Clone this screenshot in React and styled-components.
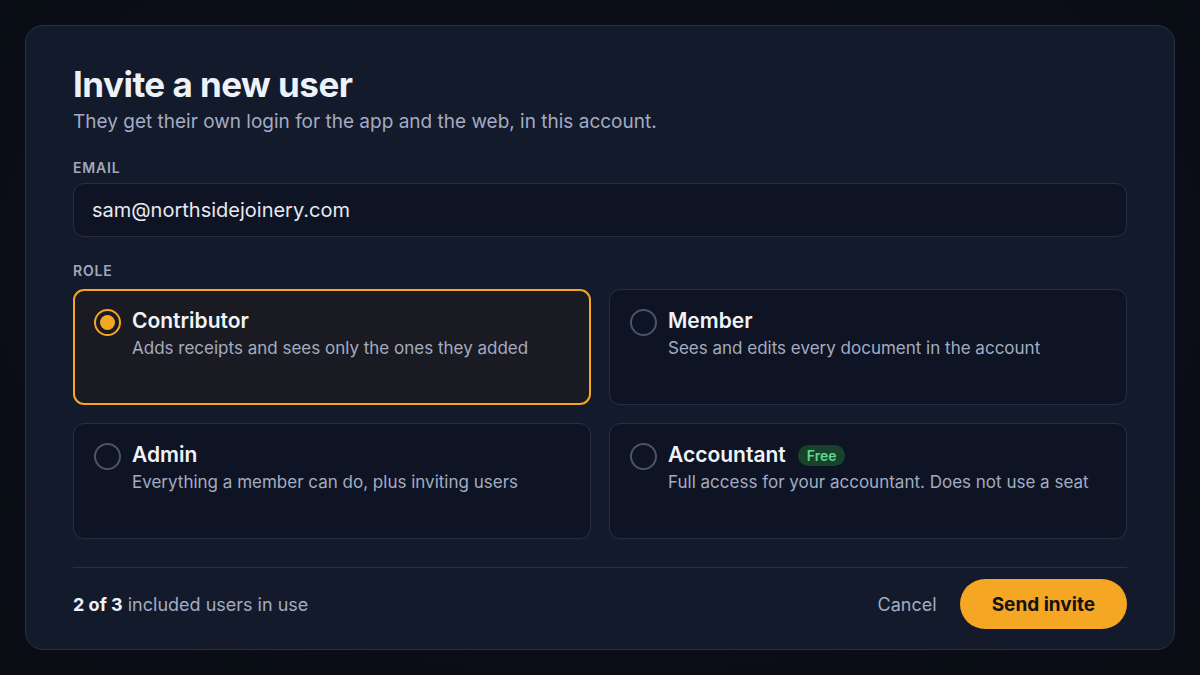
import React, { useState } from "react";
import styled, { createGlobalStyle } from "styled-components";

const GlobalStyle = createGlobalStyle`
  * { box-sizing: border-box; }
  html, body {
    margin: 0;
    padding: 0;
    background: #0a0d15;
    font-family: Inter, "Noto Sans", sans-serif;
  }
`;

const Page = styled.div`
  width: 1200px;
  height: 675px;
  padding: 25px;
  background: radial-gradient(ellipse at 50% 40%, #0d111c 0%, #090c13 100%);
`;

const Dialog = styled.div`
  height: 625px;
  background: #131a2b;
  border: 1px solid #263047;
  border-radius: 18px;
  padding: 37px 47px 19px;
  display: flex;
  flex-direction: column;
`;

const Title = styled.h1`
  margin: 0;
  font-size: 35px;
  line-height: 42px;
  font-weight: 700;
  color: #eef1f8;
  letter-spacing: -0.015em;
`;

const Subtitle = styled.p`
  margin: 3px 0 0;
  font-size: 19px;
  line-height: 28px;
  color: #a3acc0;
`;

const Label = styled.div`
  margin-top: ${(p) => p.$top}px;
  font-size: 14px;
  line-height: 17px;
  font-weight: 600;
  letter-spacing: 0.06em;
  color: #a0a9bc;
`;

const Input = styled.input`
  margin-top: 7px;
  width: 100%;
  height: 54px;
  background: #0e1424;
  border: 1px solid #262f44;
  border-radius: 11px;
  padding: 0 18px;
  font-family: inherit;
  font-size: 20px;
  color: #e6e9f1;
  outline: none;
`;

const RoleGrid = styled.div`
  margin-top: 10px;
  display: grid;
  grid-template-columns: 1fr 1fr;
  grid-auto-rows: 116px;
  gap: 18px;
`;

const RoleCard = styled.button`
  display: flex;
  align-items: flex-start;
  gap: 11px;
  text-align: left;
  font-family: inherit;
  cursor: pointer;
  border-radius: 11px;
  border: ${(p) => (p.$selected ? "2px solid #f5a623" : "1px solid #262f44")};
  background: ${(p) => (p.$selected ? "#1a1b22" : "#0e1424")};
  padding: ${(p) => (p.$selected ? "17px 19px" : "18px 20px")};
`;

const Radio = styled.span`
  flex: none;
  margin-top: 1px;
  width: 27px;
  height: 27px;
  border-radius: 50%;
  border: 2px solid ${(p) => (p.$selected ? "#f5a623" : "#4a546b")};
  display: flex;
  align-items: center;
  justify-content: center;
  &::after {
    content: "";
    width: 15px;
    height: 15px;
    border-radius: 50%;
    background: #f5a623;
    display: ${(p) => (p.$selected ? "block" : "none")};
  }
`;

const RoleText = styled.div`
  display: flex;
  flex-direction: column;
`;

const RoleName = styled.div`
  display: flex;
  align-items: center;
  gap: 12px;
  font-size: 21px;
  line-height: 26px;
  font-weight: 600;
  color: #f1f3f8;
`;

const Badge = styled.span`
  font-size: 14px;
  line-height: 21px;
  font-weight: 600;
  padding: 0 9px;
  border-radius: 999px;
  background: #17432c;
  color: #5fd88a;
`;

const RoleDesc = styled.div`
  margin-top: 2px;
  font-size: 17px;
  line-height: 24px;
  color: #a3acc0;
`;

const Footer = styled.div`
  margin-top: 28px;
  border-top: 1px solid #263047;
  padding-top: 11px;
  display: flex;
  align-items: center;
  justify-content: space-between;
`;

const Usage = styled.div`
  font-size: 18px;
  color: #a3acc0;
  b {
    color: #eef1f8;
    font-weight: 700;
  }
`;

const Actions = styled.div`
  display: flex;
  align-items: center;
  gap: 23px;
`;

const CancelButton = styled.button`
  background: none;
  border: none;
  font-family: inherit;
  font-size: 18px;
  color: #a3acc0;
  cursor: pointer;
  padding: 0;
`;

const PrimaryButton = styled.button`
  height: 50px;
  padding: 0 32px;
  border: none;
  border-radius: 999px;
  background: #f5a623;
  color: #121316;
  font-family: inherit;
  font-size: 19px;
  font-weight: 700;
  cursor: pointer;
`;

const roles = [
  { id: "contributor", name: "Contributor", desc: "Adds receipts and sees only the ones they added" },
  { id: "member", name: "Member", desc: "Sees and edits every document in the account" },
  { id: "admin", name: "Admin", desc: "Everything a member can do, plus inviting users" },
  { id: "accountant", name: "Accountant", desc: "Full access for your accountant. Does not use a seat", badge: "Free" },
];

export default function App() {
  const [role, setRole] = useState("contributor");
  const [email, setEmail] = useState("sam@northsidejoinery.com");

  return (
    <>
      <GlobalStyle />
      <Page>
        <Dialog>
          <Title>Invite a new user</Title>
          <Subtitle>They get their own login for the app and the web, in this account.</Subtitle>

          <Label $top={23}>EMAIL</Label>
          <Input value={email} onChange={(e) => setEmail(e.target.value)} />

          <Label $top={25}>ROLE</Label>
          <RoleGrid>
            {roles.map((r) => (
              <RoleCard key={r.id} $selected={role === r.id} onClick={() => setRole(r.id)}>
                <Radio $selected={role === r.id} />
                <RoleText>
                  <RoleName>
                    {r.name}
                    {r.badge && <Badge>{r.badge}</Badge>}
                  </RoleName>
                  <RoleDesc>{r.desc}</RoleDesc>
                </RoleText>
              </RoleCard>
            ))}
          </RoleGrid>

          <Footer>
            <Usage>
              <b>2 of 3</b> included users in use
            </Usage>
            <Actions>
              <CancelButton>Cancel</CancelButton>
              <PrimaryButton>Send invite</PrimaryButton>
            </Actions>
          </Footer>
        </Dialog>
      </Page>
    </>
  );
}
